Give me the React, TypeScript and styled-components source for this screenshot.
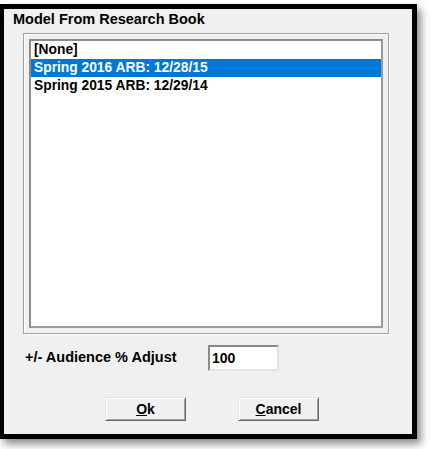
import React from "react";
import styled, { createGlobalStyle } from "styled-components";

const GlobalStyle = createGlobalStyle`
  html, body {
    margin: 0;
    padding: 0;
    background: #ffffff;
  }
  body {
    font-family: "Liberation Sans", Arial, sans-serif;
  }
`;

const models = ["[None]", "Spring 2016 ARB: 12/28/15", "Spring 2015 ARB: 12/29/14"];

const Page = styled.div`
  width: 431px;
  height: 449px;
  padding-top: 4px;
  box-sizing: border-box;
`;

const Frame = styled.div`
  width: 417px;
  height: 435px;
  box-sizing: border-box;
  border: 5px solid #000;
  border-left-width: 4px;
  background: #f0f0f0;
  box-shadow: 4px 5px 8px rgba(0, 0, 0, 0.45);
  display: flex;
  flex-direction: column;
  font-weight: bold;
  color: #000;
`;

const Title = styled.div`
  margin: 2px 0 0 9px;
  height: 16px;
  line-height: 16px;
  font-size: 14.5px;
`;

const GroupFrame = styled.div`
  margin: 6px 0 0 19px;
  width: 366px;
  height: 301px;
  box-sizing: border-box;
  border: 1px solid #a0a0a0;
  box-shadow: inset 1px 1px 0 #ffffff, 1px 1px 0 #ffffff;
  padding: 5px;
`;

const ListBox = styled.div`
  height: 100%;
  box-sizing: border-box;
  background: #fff;
  border: 2px solid;
  border-color: #8c8c8c #9a9a9a #9a9a9a #8c8c8c;
  font-size: 13.8px;
`;

const Item = styled.div<{ $selected?: boolean }>`
  height: 18px;
  line-height: 18px;
  padding-left: 3px;
  white-space: nowrap;
  background: ${(p) => (p.$selected ? "#0078d7" : "transparent")};
  color: ${(p) => (p.$selected ? "#fff" : "#000")};
`;

const AdjustRow = styled.div`
  display: flex;
  align-items: center;
  margin: 11px 0 0 21px;
`;

const Label = styled.div`
  width: 183px;
  font-size: 14.5px;
  padding-bottom: 2px;
`;

const Input = styled.div`
  width: 71px;
  height: 26px;
  box-sizing: border-box;
  background: #fff;
  border: 2px solid;
  border-color: #8a8a8a #e3e3e3 #e3e3e3 #8a8a8a;
  padding-left: 2px;
  line-height: 22px;
  font-size: 14px;
`;

const ButtonRow = styled.div`
  display: flex;
  gap: 52px;
  margin: 26px 0 0 101px;
`;

const Button = styled.div`
  width: 81px;
  height: 24px;
  box-sizing: border-box;
  background: #f0f0f0;
  border-top: 1px solid #e3e3e3;
  border-left: 1px solid #e3e3e3;
  border-right: 1px solid #696969;
  border-bottom: 1px solid #696969;
  box-shadow: inset 1px 1px 0 #ffffff, inset -1px -1px 0 #a0a0a0;
  display: flex;
  align-items: center;
  justify-content: center;
  font-size: 14px;
`;

const Key = styled.span`
  text-decoration: underline;
`;

export default function App() {
  return (
    <Page>
      <GlobalStyle />
      <Frame>
        <Title>Model From Research Book</Title>
        <GroupFrame>
          <ListBox>
            {models.map((m, i) => (
              <Item key={m} $selected={i === 1}>
                {m}
              </Item>
            ))}
          </ListBox>
        </GroupFrame>
        <AdjustRow>
          <Label>+/- Audience % Adjust</Label>
          <Input>100</Input>
        </AdjustRow>
        <ButtonRow>
          <Button>
            <span>
              <Key>O</Key>k
            </span>
          </Button>
          <Button>
            <span>
              <Key>C</Key>ancel
            </span>
          </Button>
        </ButtonRow>
      </Frame>
    </Page>
  );
}
